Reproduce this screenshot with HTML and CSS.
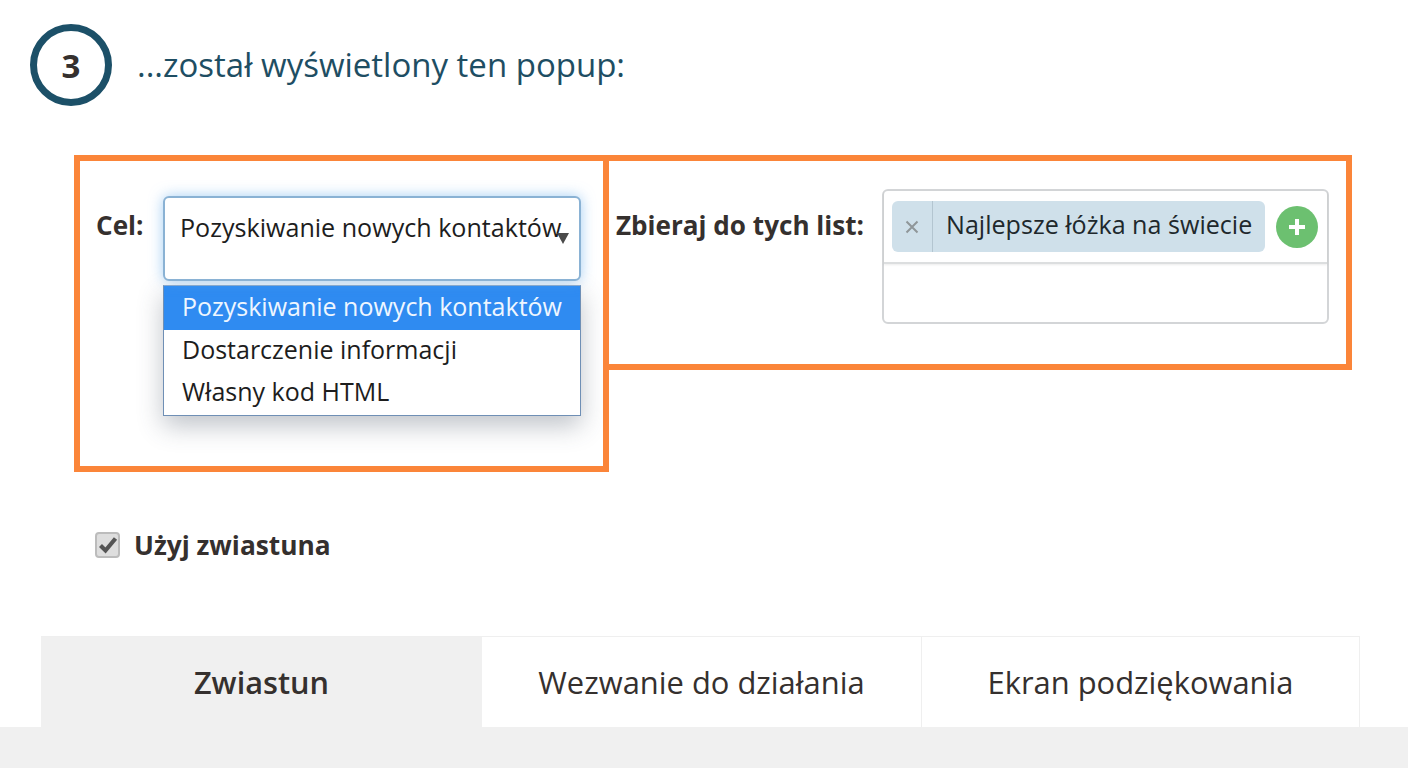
FILE: index.html
```html
<!DOCTYPE html>
<html lang="pl">
<head>
<meta charset="utf-8">
<title>Popup</title>
<link rel="stylesheet" href="styles.css">
</head>
<body>
<div class="page">
  <header class="step">
    <div class="step-num">3</div>
    <h2 class="step-title">...został wyświetlony ten popup:</h2>
  </header>
  <div class="boxes">
    <section class="box box-left">
      <span class="label label-cel">Cel:</span>
      <div class="select-col">
        <div class="select">
          <span>Pozyskiwanie nowych kontaktów</span>
          <i class="select-arrow"></i>
        </div>
        <ul class="menu">
          <li class="menu-item active">Pozyskiwanie nowych kontaktów</li>
          <li class="menu-item">Dostarczenie informacji</li>
          <li class="menu-item">Własny kod HTML</li>
        </ul>
      </div>
    </section>
    <section class="box box-right">
      <span class="label label-list">Zbieraj do tych list:</span>
      <div class="tagbox">
        <div class="tagbox-top">
          <div class="chip">
            <span class="chip-x"><svg width="14" height="14" viewBox="0 0 14 14"><path d="M1.5 1.5l11 11M12.500 1.500l-11 11" stroke="#8f9699" stroke-width="2" fill="none"/></svg></span>
            <span class="chip-text">Najlepsze łóżka na świecie</span>
          </div>
          <span class="add"><svg width="20" height="20" viewBox="0 0 20 20"><path d="M10 2v16M2 10h16" stroke="#fff" stroke-width="4" fill="none"/></svg></span>
        </div>
      </div>
    </section>
  </div>
  <label class="check">
    <span class="check-box"><svg width="20" height="18" viewBox="0 0 20 18"><path d="M2.500 9.500l5 5L17.500 2.500" stroke="#555" stroke-width="4.200" fill="none"/></svg></span>
    <span class="check-label">Użyj zwiastuna</span>
  </label>
  <nav class="tabs">
    <div class="tab tab-active">Zwiastun</div>
    <div class="tab">Wezwanie do działania</div>
    <div class="tab">Ekran podziękowania</div>
  </nav>
  <div class="band"></div>
</div>
</body>
</html>
```
FILE: styles.css
```css
* { box-sizing: border-box; }
html, body { margin: 0; padding: 0; }
body {
  width: 1408px;
  height: 768px;
  overflow: hidden;
  background: #fff;
  font-family: "Open Sans", sans-serif;
  color: #1d1d1d;
}
.page { display: flex; flex-direction: column; height: 768px; }
.step {
  display: flex;
  align-items: center;
  gap: 25px;
  margin: 24px 0 0 30px;
  height: 82px;
}
.step-num {
  width: 82px;
  height: 82px;
  border: 7px solid #1c5068;
  border-radius: 50%;
  display: flex;
  align-items: center;
  justify-content: center;
  font-size: 33px;
  font-weight: 700;
  color: #35302e;
}
.step-title {
  margin: 0 0 2px;
  font-size: 33px;
  font-weight: 400;
  color: #1e4e63;
}
.boxes {
  display: flex;
  align-items: flex-start;
  margin: 49px 0 0 74px;
}
.box { border: 6px solid #fb8539; display: flex; align-items: flex-start; }
.box-left { width: 535px; height: 317px; padding: 35px 22px 0 16px; }
.box-right { width: 749px; height: 215px; margin-left: -6px; padding: 28px 17px 0 7px; }
.label { font-weight: 700; font-size: 26.100px; color: #35302e; white-space: nowrap; }
.label-cel { width: 67px; padding-top: 10px; line-height: 38px; }
.label-list { width: 266px; padding-top: 17px; line-height: 38px; }
.select-col { width: 418px; display: flex; flex-direction: column; gap: 4px; }
.select {
  position: relative;
  height: 85px;
  padding: 12px 15px 0;
  background: #fff;
  border: 2px solid #8ab2d4;
  border-radius: 6px;
  box-shadow: 0 0 14px rgba(90, 165, 235, 0.55);
  font-size: 25.100px;
  line-height: 34px;
  white-space: nowrap;
}
.select-arrow {
  position: absolute;
  right: 10px;
  top: 35px;
  border-left: 6px solid transparent;
  border-right: 6px solid transparent;
  border-top: 11px solid #4a4a4a;
}
.menu {
  list-style: none;
  margin: 0;
  padding: 0;
  border: 1px solid #6f8fb5;
  border-top-color: #8fa9c8;
  box-shadow: 0 10px 24px rgba(60, 70, 90, 0.32);
  background: #fff;
  font-size: 25px;
}
.menu-item { height: 43px; line-height: 39px; padding-left: 18px; white-space: nowrap; }
.menu-item.active { height: 44px; line-height: 41px; background: #2f8bf1; color: #eef6ff; }
.menu-item:last-child { height: 42px; line-height: 37px; }
.tagbox {
  width: 447px;
  height: 135px;
  border: 2px solid #d3d5d7;
  border-radius: 6px;
  background: #fff;
}
.tagbox-top {
  display: flex;
  align-items: center;
  gap: 11px;
  height: 73px;
  padding: 0 9px 0 8px;
  border-bottom: 2px solid #dcdedf;
  box-shadow: 0 1px 2px rgba(0, 0, 0, 0.08);
}
.chip {
  display: flex;
  align-items: center;
  width: 373px;
  height: 51px;
  background: #cfe0ea;
  border-radius: 6px;
  color: #20282c;
}
.chip-x {
  display: flex;
  align-items: center;
  justify-content: center;
  width: 41px;
  height: 51px;
  border-right: 1px solid #b3c5d0;
  flex: none;
}
.chip-text { font-size: 25.100px; line-height: 47px; height: 51px; padding-left: 13px; white-space: nowrap; }
.add {
  width: 42px;
  height: 42px;
  border-radius: 50%;
  background: #6cc070;
  display: flex;
  align-items: center;
  justify-content: center;
  flex: none;
}
.check {
  display: flex;
  align-items: center;
  gap: 14px;
  margin: 59px 0 0 95px;
  height: 28px;
}
.check-box {
  width: 25px;
  height: 26px;
  border: 2px solid #bcbcbc;
  border-radius: 4px;
  background: #dedede;
  display: flex;
  align-items: center;
  justify-content: center;
}
.check-box svg { flex: none; }
.check-label { font-size: 26.300px; font-weight: 700; color: #35302e; }
.tabs {
  display: grid;
  grid-template-columns: 441px 440px 438px;
  margin: 77px 0 0 41px;
  width: 1319px;
  height: 91px;
  border-top: 1px solid #efefef;
}
.tab {
  display: flex;
  align-items: center;
  justify-content: center;
  font-size: 30.900px;
  color: #35302e;
  border-right: 1px solid #efefef;
  padding-bottom: 1px;
}
.tab-active { background: #f0f0f0; font-weight: 600; font-size: 30.700px; border-right: 0; }
.band { flex: 1; background: #f0f0f0; }
```
